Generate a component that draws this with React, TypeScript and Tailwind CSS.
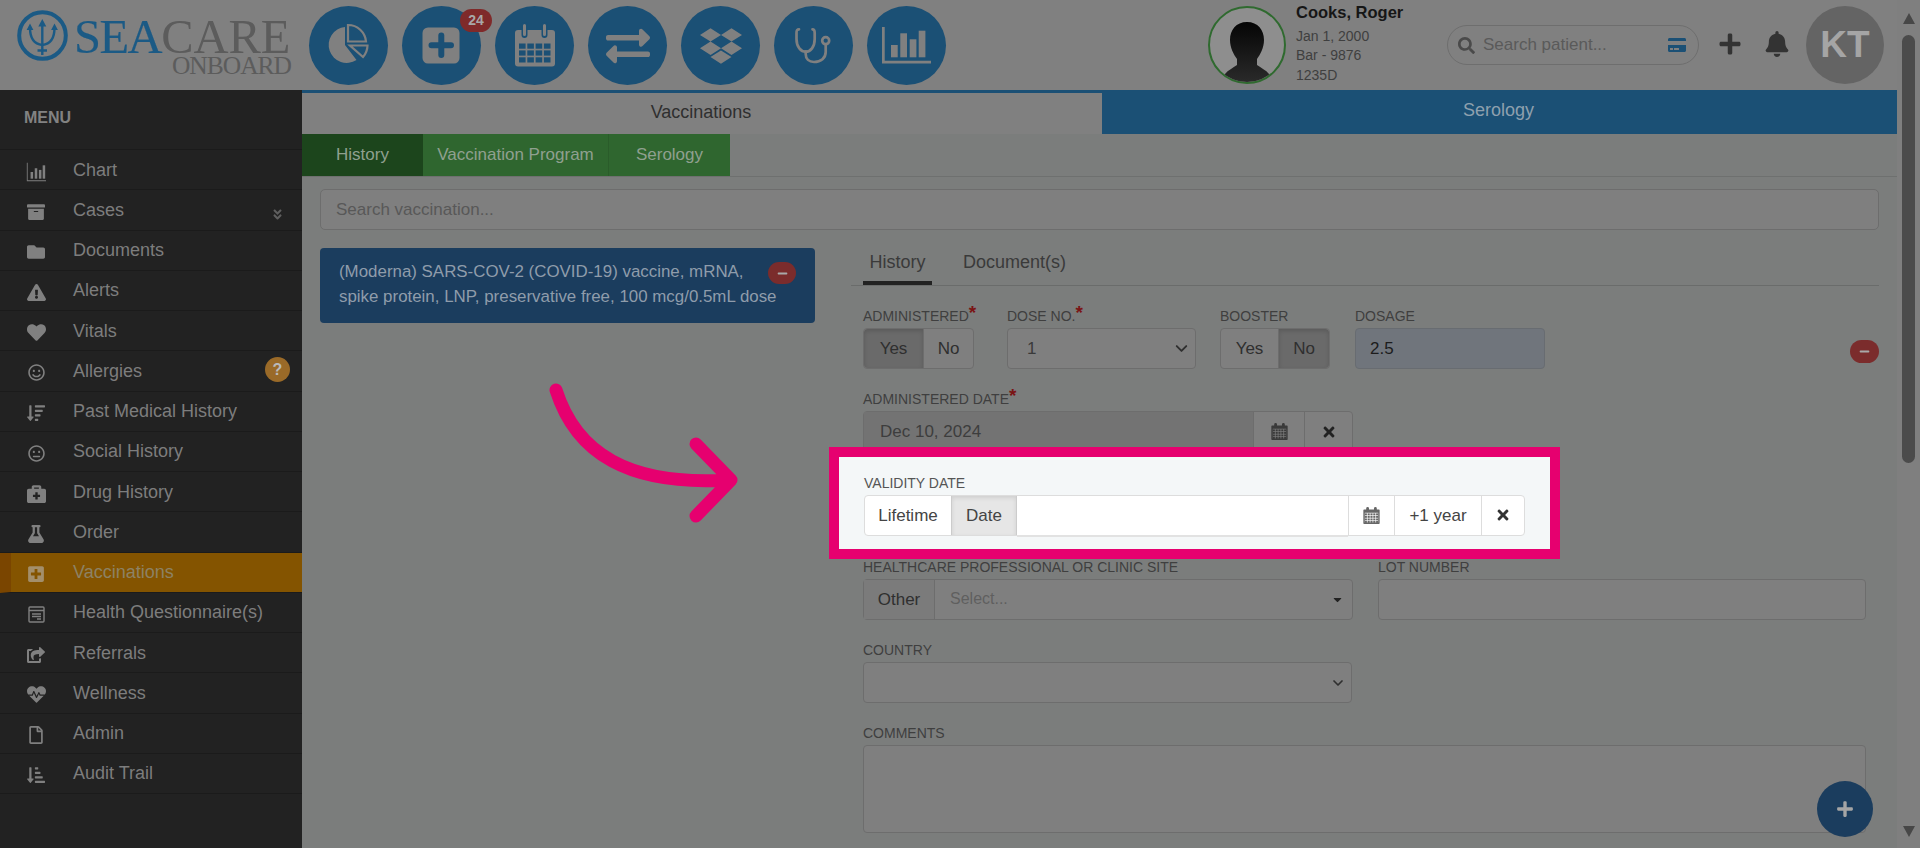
import React from "react";
import {
  FaArchive,
  FaBriefcaseMedical,
  FaDropbox,
  FaExchangeAlt,
  FaExclamationTriangle,
  FaFlask,
  FaFolder,
  FaHeart,
  FaHeartbeat,
  FaMinus,
  FaPlus,
  FaPlusSquare,
  FaRegFile,
  FaRegMeh,
  FaRegSmile,
  FaSearch,
  FaShareSquare,
  FaSortAmountDown,
  FaSortAmountDownAlt,
  FaBell,
  FaTimes,
  FaCreditCard,
  FaCaretDown,
  FaAngleDoubleDown,
} from "react-icons/fa";
import { ChevronDown } from "lucide-react";

function BarsIcon({ size, weight }: { size: number; weight: number }) {
  return (
    <svg width={size} height={size} viewBox="0 0 48 48" fill="currentColor">
      <path d={`M2 2h${weight}v42h44v${weight}H2z`} />
      <rect x="11" y="24" width="6" height="16" />
      <rect x="21" y="15" width="6" height="25" />
      <rect x="31" y="19" width="6" height="21" />
      <rect x="40" y="8" width="6" height="32" />
    </svg>
  );
}

function Calendar({ size }: { size: number }) {
  const cells = [];
  for (let r = 0; r < 4; r++) {
    for (let c = 0; c < 5; c++) {
      cells.push(<rect key={`${r}-${c}`} x={5 + c * 8} y={18 + r * 7.2} width="6" height="5.4" />);
    }
  }
  return (
    <svg width={size} height={size} viewBox="0 0 48 48" fill="currentColor">
      <path d="M3 7h6V4a4 4 0 0 1 8 0v3h14V4a4 4 0 0 1 8 0v3h6a2 2 0 0 1 2 2v37a2 2 0 0 1-2 2H3a2 2 0 0 1-2-2V9a2 2 0 0 1 2-2zm2 9v28h38V16z" />
      {cells}
    </svg>
  );
}

function NavSvg({ children }: { children: React.ReactNode }) {
  return (
    <svg width="79" height="79" viewBox="0 0 79 79" fill="none" className="absolute top-0 left-0">
      {children}
    </svg>
  );
}

const GRAY = "#808080";
const BLUE = "#1b5075";

function NavPie() {
  return (
    <NavSvg>
      <path d="M36 21A18 18 0 1 0 47.500 54L36 39Z" fill={GRAY} />
      <path d="M39 19V35.500H57A18 18 0 0 0 39 19Z" stroke={GRAY} strokeWidth="2.2" />
      <path d="M41 39.500H58.500A18 18 0 0 1 54 51Z" stroke={GRAY} strokeWidth="2.2" />
    </NavSvg>
  );
}

function NavPlus() {
  return (
    <NavSvg>
      <rect x="20.500" y="21.500" width="37" height="36" rx="5.500" fill={GRAY} />
      <path d="M39.300 29.500V49M29.500 39.300H49" stroke={BLUE} strokeWidth="6" strokeLinecap="round" />
    </NavSvg>
  );
}

function NavCalendar() {
  const cells = [];
  for (let r = 0; r < 3; r++) {
    for (let c = 0; c < 4; c++) {
      cells.push(<rect key={`${r}-${c}`} x={24 + c * 8.3} y={37.500 + r * 6.9} width="6.600" height="5.200" fill={BLUE} />);
    }
  }
  return (
    <NavSvg>
      <rect x="20" y="24" width="40" height="36.500" rx="3" fill={GRAY} />
      <path d="M29.500 19V29M49.500 19V29" stroke={BLUE} strokeWidth="6" strokeLinecap="round" />
      <path d="M29.500 19.500V28.500M49.500 19.500V28.500" stroke={GRAY} strokeWidth="3" strokeLinecap="round" />
      {cells}
    </NavSvg>
  );
}

function NavStethoscope() {
  return (
    <NavSvg>
      <g stroke={GRAY} strokeWidth="2.700" strokeLinecap="round">
        <path d="M25 23.300C22.500 23.300 22.500 25 22.500 27V33C22.500 41 27 45.700 31.700 45.700C36.500 45.700 40.700 41 40.700 33V27C40.700 25 40.700 23.300 38.500 23.300" />
        <path d="M31.700 45.700V48C31.700 53 35 56 40 56C47 56 51.700 52 51.700 46V38.500" />
        <circle cx="51.700" cy="34.700" r="3.500" />
      </g>
    </NavSvg>
  );
}

function NavChart() {
  return (
    <NavSvg>
      <path d="M15 21h2.700v33.700H64v2.700H15z" fill={GRAY} />
      <rect x="24" y="39" width="6.700" height="12.300" fill={GRAY} />
      <rect x="33.300" y="27.300" width="6.700" height="24" fill={GRAY} />
      <rect x="42.700" y="33.300" width="6.700" height="18" fill={GRAY} />
      <rect x="51.700" y="24.700" width="6.700" height="26.600" fill={GRAY} />
    </NavSvg>
  );
}

function Trident() {
  return (
    <svg width="51" height="51" viewBox="0 0 51 51" fill="none" className="shrink-0">
      <circle cx="25.500" cy="25.500" r="23.300" stroke="#1b5a85" strokeWidth="4" />
      <g stroke="#1b5a85" strokeWidth="2.400">
        <path d="M25.300 13V45M13 18C13 28 17 34 25.300 35C33.500 34 37.500 28 37.500 18M20.500 40.500H30" />
      </g>
      <path d="M25.300 9l4 7.500h-8zM13 13.500l3.400 6.500H9.600zM37.500 13.500l3.400 6.500h-6.800z" fill="#1b5a85" />
    </svg>
  );
}

function Silhouette() {
  return (
    <svg width="72" height="74" viewBox="0 0 72 74" className="mt-auto">
      <defs>
        <linearGradient id="sil" x1="0" y1="0" x2="0" y2="1">
          <stop offset="0" stopColor="#050505" />
          <stop offset="1" stopColor="#2a2a2a" />
        </linearGradient>
      </defs>
      <path
        d="M36 14c11 0 17 8 17 18 0 8-4 15-7 19v6c4 3 9 5 12 9l4 8H10l4-8c3-4 8-6 12-9v-6c-3-4-7-11-7-19 0-10 6-18 17-18z"
        fill="url(#sil)"
      />
    </svg>
  );
}

const nav = [
  <NavPie />,
  <NavPlus />,
  <NavCalendar />,
  <FaExchangeAlt size={44} />,
  <FaDropbox size={42} />,
  <NavStethoscope />,
  <NavChart />,
];

const menu: { label: string; icon: React.ReactNode; active?: boolean; extra?: React.ReactNode }[] = [
  { label: "Chart", icon: <BarsIcon size={20} weight={2} /> },
  {
    label: "Cases",
    icon: <FaArchive size={18} />,
    extra: <FaAngleDoubleDown size={13} className="absolute right-[18px] top-[18px] text-[#5f5f5f]" />,
  },
  { label: "Documents", icon: <FaFolder size={18} /> },
  { label: "Alerts", icon: <FaExclamationTriangle size={19} /> },
  { label: "Vitals", icon: <FaHeart size={19} /> },
  {
    label: "Allergies",
    icon: <FaRegSmile size={17} />,
    extra: (
      <span className="absolute right-[12px] top-[6px] flex h-[25px] w-[25px] items-center justify-center rounded-full bg-[#9a6a28] text-[16px] font-bold text-[#b9b9b9]">
        ?
      </span>
    ),
  },
  { label: "Past Medical History", icon: <FaSortAmountDown size={18} /> },
  { label: "Social History", icon: <FaRegMeh size={17} /> },
  { label: "Drug History", icon: <FaBriefcaseMedical size={19} /> },
  { label: "Order", icon: <FaFlask size={18} /> },
  { label: "Vaccinations", icon: <FaPlusSquare size={18} />, active: true },
  {
    label: "Health Questionnaire(s)",
    icon: (
      <svg width="17" height="17" viewBox="0 0 17 17" fill="none" stroke="currentColor">
        <rect x="1" y="1" width="15" height="15" rx="1" strokeWidth="1.4" />
        <path d="M1 4.500h15M4 8h9M4 10.500h9M9 13h4" strokeWidth="1.500" />
      </svg>
    ),
  },
  { label: "Referrals", icon: <FaShareSquare size={18} /> },
  { label: "Wellness", icon: <FaHeartbeat size={19} /> },
  { label: "Admin", icon: <FaRegFile size={18} /> },
  { label: "Audit Trail", icon: <FaSortAmountDownAlt size={18} /> },
];

function Sidebar() {
  return (
    <aside className="h-full w-[302px] shrink-0 bg-[#222222] text-[18px] text-[#7d7d7d]">
      <div className="flex h-[60px] items-center border-b border-[#1b1b1b] pb-[4px] pl-[24px] text-[16px] font-bold text-[#828282]">
        MENU
      </div>
      {menu.map((m) => (
        <div
          key={m.label}
          className={`relative flex h-[40.25px] items-center border-b border-[#1b1b1b] ${
            m.active ? "border-l-[11px] border-l-[#7a4500] bg-[#845400] pl-[10px] text-[#8d8264]" : "pl-[21px]"
          }`}
        >
          <span className={`mt-[4px] flex w-[30px] justify-center ${m.active ? "text-[#a38f6b]" : "text-[#808080]"}`}>{m.icon}</span>
          <span className="mt-[1px] ml-[22px]">{m.label}</span>
          {m.extra}
        </div>
      ))}
    </aside>
  );
}

function Label({ text, required }: { text: string; required?: boolean }) {
  return (
    <div className="h-[24px] text-[14px] leading-[24px] whitespace-nowrap text-[#3f3f3f]">
      {text}
      {required && <span className="relative -top-[2px] text-[19px] leading-[10px] font-bold text-[#7a1414]">*</span>}
    </div>
  );
}

function Toggle({ selected, widths }: { selected: string; widths: [string, string] }) {
  return (
    <div className="flex h-[41px] w-fit rounded-[4px] border border-[#6d6d6d] bg-[#7f7f7f] text-[17px] text-[#2f2f2f]">
      <span
        className={`flex items-center justify-center rounded-l-[4px] ${widths[0]} ${
          selected === "Yes" ? "bg-[#6a6a6a] shadow-[inset_0_2px_4px_rgba(0,0,0,0.15)]" : ""
        }`}
      >
        Yes
      </span>
      <span
        className={`flex items-center justify-center rounded-r-[4px] border-l border-[#6d6d6d] ${widths[1]} ${
          selected === "No" ? "bg-[#6a6a6a] shadow-[inset_0_2px_4px_rgba(0,0,0,0.15)]" : ""
        }`}
      >
        No
      </span>
    </div>
  );
}

function Form() {
  return (
    <div className="ml-[12px] w-[1004px] pt-[18px]">
      <div className="flex h-[83.4px]">
        <div className="w-[144px] shrink-0">
          <Label text="ADMINISTERED" required />
          <Toggle selected="Yes" widths={["w-[59px]", "w-[50px]"]} />
        </div>
        <div className="w-[213px] shrink-0">
          <Label text="DOSE NO." required />
          <div className="flex h-[41px] w-[189px] items-center justify-between rounded-[4px] border border-[#6d6d6d] bg-[#7f7f7f] pr-[4px] pl-[19px] text-[17px] text-[#3a3a3a]">
            1
            <ChevronDown size={19} strokeWidth={2.4} className="text-[#2f2f2f]" />
          </div>
        </div>
        <div className="w-[135px] shrink-0">
          <Label text="BOOSTER" />
          <Toggle selected="No" widths={["w-[57px]", "w-[51px]"]} />
        </div>
        <div className="w-[190px] shrink-0">
          <Label text="DOSAGE" />
          <div className="flex h-[41px] items-center rounded-[4px] border border-[#686c71] bg-[#70757c] pl-[14px] text-[17px] text-[#1c1c1c]">
            2.5
          </div>
        </div>
        <span className="mt-[36px] ml-[305px] flex h-[23px] w-[29px] shrink-0 items-center justify-center rounded-full bg-[#7b2c2c] text-[#a9a9a9]">
          <FaMinus size={11} />
        </span>
      </div>

      <div className="h-[83.4px]">
        <Label text="ADMINISTERED DATE" required />
        <div className="flex h-[47px] w-[490px] rounded-[4px] border border-[#6d6d6d] bg-[#7f7f7f] text-[17px]">
          <span className="flex w-[389px] items-center bg-[#737373] pb-[6px] pl-[16px] text-[#3d3d3d]">Dec 10, 2024</span>
          <span className="flex w-[51px] items-center justify-center border-l border-[#6d6d6d] pb-[6px] text-[#3a3a3a]">
            <Calendar size={17} />
          </span>
          <span className="flex w-[48px] items-center justify-center border-l border-[#6d6d6d] pb-[6px] text-[#222222]">
            <FaTimes size={16} />
          </span>
        </div>
      </div>

      {/* highlighted field of the step */}
      <div className="relative z-10 -mt-[24px] -mb-[4px] -ml-[34px] h-[112px] w-[731px] border-[10px] border-[#e6006f] bg-[#f4f7f8] pt-[14px] pl-[25px]">
        <div className="h-[24px] text-[14px] leading-[24px] text-[#555555]">VALIDITY DATE</div>
        <div className="flex h-[41px] w-[661px] rounded-[4px] border border-[#dddddd] bg-white text-[17px] text-[#444444]">
          <span className="flex w-[86px] items-center justify-center">Lifetime</span>
          <span className="flex w-[66px] items-center justify-center border-x border-[#cccccc] bg-[#e6e6e6] shadow-[inset_0_2px_4px_rgba(0,0,0,0.1)]">
            Date
          </span>
          <span className="h-[41px] w-[331px] border-b-2 border-[#e2e2e2]" />
          <span className="flex w-[46px] items-center justify-center border-l border-[#dddddd] text-[#666666]">
            <Calendar size={17} />
          </span>
          <span className="flex w-[87px] items-center justify-center border-l border-[#dddddd]">+1 year</span>
          <span className="flex flex-1 items-center justify-center border-l border-[#dddddd] text-[#333333]">
            <FaTimes size={16} />
          </span>
        </div>
      </div>

      <div className="flex h-[83.4px]">
        <div className="w-[515px] shrink-0">
          <Label text="HEALTHCARE PROFESSIONAL OR CLINIC SITE" />
          <div className="flex h-[41px] w-[490px] rounded-[4px] border border-[#6d6d6d] bg-[#7f7f7f] text-[17px]">
            <span className="flex w-[71px] items-center justify-center border-r border-[#6d6d6d] bg-[#7b7b7b] text-[#2f2f2f]">Other</span>
            <span className="flex flex-1 items-center justify-between pr-[8px] pl-[15px] text-[16px] text-[#5f5f5f]">
              Select...
              <FaCaretDown size={13} className="text-[#222222]" />
            </span>
          </div>
        </div>
        <div className="w-[488px] shrink-0">
          <Label text="LOT NUMBER" />
          <div className="h-[41px] rounded-[4px] border border-[#6d6d6d] bg-[#7f7f7f]" />
        </div>
      </div>

      <div className="h-[83px]">
        <Label text="COUNTRY" />
        <div className="flex h-[41px] w-[489px] items-center justify-end rounded-[4px] border border-[#6d6d6d] bg-[#7f7f7f] pr-[5px]">
          <ChevronDown size={16} strokeWidth={2.6} className="text-[#2f2f2f]" />
        </div>
      </div>

      <div>
        <Label text="COMMENTS" />
        <div className="h-[88px] w-[1003px] rounded-[4px] border border-[#6d6d6d] bg-[#7f7f7f]" />
      </div>
    </div>
  );
}

function Header() {
  return (
    <header className="flex h-[90px] shrink-0 items-start bg-[#808080]">
      <div className="flex w-[309px] shrink-0 pt-[10px] pl-[17px]">
        <Trident />
        <div className="ml-[6px] w-[217px] font-['Liberation_Serif',serif]">
          <div className="h-[46px] pt-[4px] text-[48.5px] leading-[46px] whitespace-nowrap">
            <span className="tracking-[-1.5px] text-[#1b5a85] [-webkit-text-stroke:0.2px_#1b5a85]">SEA</span>
            <span className="text-[#5c5c5c]">CARE</span>
          </div>
          <div className="-mt-[2px] text-right text-[25.5px] leading-[24px] tracking-[-1px] whitespace-nowrap text-[#5c5c5c]">ONBOARD</div>
        </div>
      </div>
      <div className="flex gap-[14px] pt-[6px]">
        {nav.map((icon, i) => (
          <div key={i} className="relative flex h-[79px] w-[79px] items-center justify-center rounded-full bg-[#1b5075] text-[#808080]">
            {icon}
            {i === 1 && (
              <span className="absolute top-[3px] -right-[11px] flex h-[23px] w-[32px] items-center justify-center rounded-full bg-[#7f2a2a] text-[14px] font-bold text-[#a8a8a8]">
                24
              </span>
            )}
          </div>
        ))}
      </div>
      <div className="mt-[6px] ml-[262px] flex h-[78px] w-[78px] items-end justify-center overflow-hidden rounded-full border-[2px] border-[#2f6a2f] bg-[#8e8e8e]">
        <Silhouette />
      </div>
      <div className="ml-[10px] w-[151px] text-[14px] leading-[19.500px] text-[#3f3f3f]">
        <div className="mt-[3px] mb-[4px] text-[16.500px] font-bold text-[#161616]">Cooks, Roger</div>
        <div>Jan 1, 2000</div>
        <div>Bar - 9876</div>
        <div>1235D</div>
      </div>
      <div className="mt-[25px] flex h-[40px] w-[252px] items-center rounded-full border border-[#6e6e6e] pr-[12px] pl-[10px] text-[17px] text-[#5a5a5a]">
        <FaSearch size={17} className="text-[#4a4a4a]" />
        <span className="ml-[8px] flex-1">Search patient...</span>
        <FaCreditCard size={18} className="text-[#1b5075]" />
      </div>
      <FaPlus size={24} className="mt-[32px] ml-[19px] text-[#333333]" />
      <FaBell size={26} className="mt-[31px] ml-[22px] text-[#333333]" />
      <div className="mt-[6px] ml-[16px] flex h-[78px] w-[78px] items-center justify-center rounded-full bg-[#646464] text-[37px] font-bold text-[#a5a5a5]">
        KT
      </div>
    </header>
  );
}

function Arrow() {
  return (
    <svg width="220" height="150" viewBox="0 0 220 150" className="absolute top-[378px] left-[538px]">
      <path
        d="M18 12C38 75 90 108 190 102M158 66L193 102L158 138"
        fill="none"
        stroke="#e6006f"
        strokeWidth="13"
        strokeLinecap="round"
        strokeLinejoin="round"
      />
    </svg>
  );
}

export default function App() {
  return (
    <div className="relative flex h-screen w-full overflow-hidden bg-[#7b7d7c] font-['Liberation_Sans',Arial,sans-serif]">
      <div className="flex w-[1897px] flex-col">
        <Header />
        <div className="flex min-h-0 flex-1">
          <Sidebar />
          <main className="flex min-w-0 flex-1 flex-col">
            <div className="flex h-[44px] shrink-0 text-[18px]">
              <div className="flex w-[800px] items-center justify-center border-t-[3px] border-[#1b5075] bg-[#808080] pr-[2px] text-[#2f2f2f]">
                <span className="-mt-[3px]">Vaccinations</span>
              </div>
              <div className="flex flex-1 items-center justify-center bg-[#1b5075] pr-[2px] text-[#8ea0ae]">
                <span className="-mt-[3px]">Serology</span>
              </div>
            </div>
            <div className="flex h-[43px] shrink-0 border-b border-[#6e706f] text-[17px] text-[#8fa08f]">
              <span className="flex w-[121px] items-center justify-center bg-[#1c451c]">History</span>
              <span className="flex w-[186px] items-center justify-center border-r border-[#2a5c2a] bg-[#2f662f]">Vaccination Program</span>
              <span className="flex w-[121px] items-center justify-center bg-[#2f662f]">Serology</span>
            </div>
            <div className="mt-[12px] ml-[18px] flex h-[41px] w-[1559px] shrink-0 items-center rounded-[5px] border border-[#6d6d6d] bg-[#7f7f7f] pl-[15px] text-[17px] text-[#585858]">
              Search vaccination...
            </div>
            <div className="mt-[18px] flex min-h-0 flex-1">
              <div className="ml-[18px] flex h-[75px] w-[495px] shrink-0 rounded-[4px] bg-[#1b3d5e] pt-[12px] pl-[19px] text-[16.9px] leading-[24.500px] text-[#8f9cab]">
                <div className="w-[429px] whitespace-nowrap">
                  (Moderna) SARS-COV-2 (COVID-19) vaccine, mRNA,
                  <br />
                  spike protein, LNP, preservative free, 100 mcg/0.5mL dose
                </div>
                <span className="mt-[2px] flex h-[22px] w-[28px] items-center justify-center rounded-full bg-[#7b2c2c] text-[#a9a9a9]">
                  <FaMinus size={11} />
                </span>
              </div>
              <div className="ml-[36px] w-[1028px]">
                <div className="flex h-[38px] items-start border-b border-[#6a6c6b] pl-[12px] text-[18px] text-[#3a3a3a]">
                  <span className="flex h-[37px] w-[69px] justify-center border-b-[4px] border-[#222222] pt-[1px]">History</span>
                  <span className="ml-[31px] pt-[1px]">Document(s)</span>
                </div>
                <Form />
              </div>
            </div>
          </main>
        </div>
      </div>

      <div className="flex w-[23px] flex-col items-center bg-[#7f7f7f] pt-[13px]">
        <svg width="12" height="11" viewBox="0 0 12 11" fill="#474747">
          <path d="M6 0l6 11H0z" />
        </svg>
        <div className="mt-[11px] h-[428px] w-[13px] rounded-full bg-[#4b4b4b]" />
        <svg width="12" height="11" viewBox="0 0 12 11" fill="#474747" className="mt-[363px]">
          <path d="M0 0h12L6 11z" />
        </svg>
      </div>

      <Arrow />
      <div className="absolute top-[781px] left-[1817px] z-20 flex h-[56px] w-[56px] items-center justify-center rounded-full bg-[#1b3d5e] text-[#a5a5a5]">
        <FaPlus size={18} />
      </div>
    </div>
  );
}
